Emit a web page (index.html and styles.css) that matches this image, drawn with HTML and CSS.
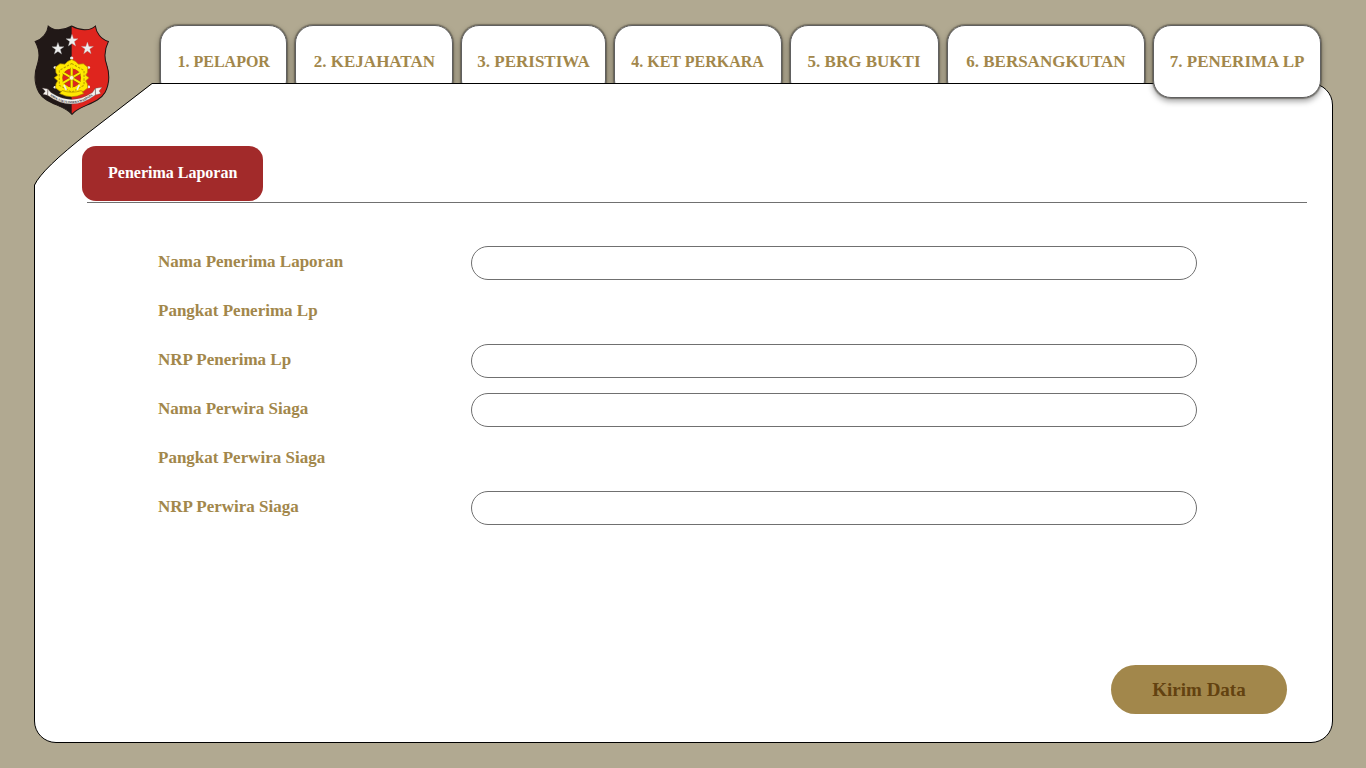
FILE: index.html
```html
<!DOCTYPE html>
<html lang="id">
<head>
<meta charset="utf-8">
<meta name="viewport" content="width=device-width, initial-scale=1">
<title>Penerima Laporan</title>
<link rel="stylesheet" href="styles.css">
</head>
<body>
<div class="page">
  <header class="header">
    <svg class="logo" viewBox="30 28 226 269" role="img" aria-label="Logo Reserse">
      <defs>
        <path id="shield" d="M72 31C88 46 116 46 142 31C168 46 197 46 213 31C215 51 230 71 252 77C240 101 239 124 246 144C256 174 254 206 242 229C222 265 165 267 143 295C121 267 64 265 44 229C31 205 29 174 40 144C47 124 46 101 33 77C54 71 70 51 72 31Z"/>
        <clipPath id="right-half"><path d="M142 20H260V300H142Z"/></clipPath>
        <path id="star" d="M0-19L4.500-6L18-6L7 2L11 16L0 8L-11 16L-7 2L-18-6L-4.500-6Z"/>
        <path id="motto" d="M77 239Q142 287 210 235"/>
      </defs>
      <use href="#shield" fill="#211817"/>
      <use href="#shield" fill="#df251e" clip-path="url(#right-half)"/>
      <use href="#shield" fill="none" stroke="#211817" stroke-width="3"/>
      <g fill="#eeeeee" stroke="#aaa" stroke-width="1">
        <use href="#star" x="143" y="75"/><use href="#star" x="101" y="99"/><use href="#star" x="189" y="98"/>
      </g>
      <g fill="#eee">
        <circle cx="142" cy="127" r="5"/><circle cx="92" cy="155" r="4"/><circle cx="193" cy="155" r="4"/><circle cx="92" cy="214" r="4"/><circle cx="193" cy="213" r="4"/>
      </g>
      <path d="M142 131L154 137L162 145L177 144L190 154L189 170L184 178L194 186L184 195L189 204L190 216L177 226L162 226L154 236L142 242L130 236L122 226L107 226L94 216L95 204L100 195L90 186L100 178L95 170L94 154L107 144L122 145L130 137Z" fill="#ffe800" stroke="#b38d00" stroke-width="2"/>
      <path d="M142 143L179 164V208L142 229L105 208V164Z" fill="none" stroke="#b59b00" stroke-width="3" stroke-dasharray="7 4"/>
      <circle cx="142" cy="186" r="31" fill="#df251e" stroke="#ffed00" stroke-width="6"/>
      <circle cx="142" cy="186" r="27" fill="none" stroke="#8a6500" stroke-width="1"/>
      <path d="M142 156V216M116 171L168 201M168 171L116 201" stroke="#8a6500" stroke-width="8"/>
      <path d="M142 154V218M115 170L169 202M169 170L115 202" stroke="#ffed00" stroke-width="6"/>
      <circle cx="142" cy="186" r="7" fill="#fff9d0" stroke="#c6a800" stroke-width="2"/>
      <path d="M119 208L126 222M165 208L158 222" stroke="#eee" stroke-width="5"/>
      <path d="M114 224Q142 234 171 224L178 233Q142 252 106 233Z" fill="#ffe800" stroke="#ab8800" stroke-width="2"/>
      <path d="M54 216L71 219L80 230Q142 271 204 230L213 217L233 214L224 225L229 233L213 237Q142 291 70 238L56 235L63 226Z" fill="#f4f1ed" stroke="#5b4a45" stroke-width="1"/>
      <path d="M71 219L70 238M213 217L213 237" stroke="#5b4a45" stroke-width="2"/>
      <text class="motto"><textPath href="#motto">SIDIK SAKTI INDERA WASPADA</textPath></text>
    </svg>
    <nav class="tabs" aria-label="Bagian laporan">
      <button type="button" class="tab tab-pelapor tab-small">1. PELAPOR</button>
      <button type="button" class="tab tab-kejahatan">2. KEJAHATAN</button>
      <button type="button" class="tab tab-peristiwa">3. PERISTIWA</button>
      <button type="button" class="tab tab-perkara tab-small">4. KET PERKARA</button>
      <button type="button" class="tab tab-bukti">5. BRG BUKTI</button>
      <button type="button" class="tab tab-bersangkutan">6. BERSANGKUTAN</button>
      <button type="button" class="tab tab-penerima tab-active" aria-current="page">7. PENERIMA LP</button>
    </nav>
  </header>

  <main class="panel">
    <svg class="corner" viewBox="0 0 119 103" aria-hidden="true">
      <path class="corner-fill" d="M0 0H118V1L54 50Q8 86 1 102H0Z"/>
      <path class="corner-line" d="M119 0.500H118L54 50Q8 86 0.500 102V103"/>
    </svg>
    <div class="section-head"><h1 class="section-title">Penerima Laporan</h1></div>
    <form class="form">
      <div class="fields">
        <div class="row"><label for="nama-penerima">Nama Penerima Laporan</label><input id="nama-penerima" type="text"></div>
        <div class="row"><span>Pangkat Penerima Lp</span></div>
        <div class="row"><label for="nrp-penerima">NRP Penerima Lp</label><input id="nrp-penerima" type="text"></div>
        <div class="row"><label for="nama-perwira">Nama Perwira Siaga</label><input id="nama-perwira" type="text"></div>
        <div class="row"><span>Pangkat Perwira Siaga</span></div>
        <div class="row"><label for="nrp-perwira">NRP Perwira Siaga</label><input id="nrp-perwira" type="text"></div>
      </div>
      <button class="submit" type="submit">Kirim Data</button>
    </form>
  </main>
</div>
</body>
</html>
```
FILE: styles.css
```css
* { box-sizing: border-box; }
body {
  margin: 0;
  background: #b1a991;
  color: #a2874b;
  font-family: "Liberation Serif", "Times New Roman", serif;
  font-weight: bold;
}
button, input { font: inherit; color: inherit; }
.page {
  display: flex;
  flex-direction: column;
  min-height: 100vh;
  padding: 25px 33px 25px 34px;
}
.header { display: flex; align-items: flex-start; padding-right: 12px; }
.logo {
  position: relative;
  z-index: 2;
  flex: none;
  width: 76px;
  height: 90px;
  margin-bottom: -17px;
}
.motto { font-size: 9px; fill: #211817; }
.tabs { display: flex; flex: 1; gap: 8px; margin-left: 50px; }
.tab {
  flex: 1 1 0;
  min-width: 0;
  height: 73px;
  padding: 0;
  border: 1px solid #606060;
  border-radius: 18px;
  background: #fff;
  box-shadow: 0 0 1px 1px rgba(70, 65, 55, 0.5), 0 3px 6px rgba(0, 0, 0, 0.4);
  font-size: 17px;
  line-height: 20px;
  white-space: nowrap;
  cursor: pointer;
}
.tab-small { font-size: 16px; }
.tab-pelapor { flex-grow: 127; }
.tab-kejahatan { flex-grow: 158; }
.tab-peristiwa { flex-grow: 144; }
.tab-perkara { flex-grow: 168; }
.tab-bukti { flex-grow: 149; }
.tab-bersangkutan { flex-grow: 199; }
.tab-penerima { flex-grow: 168; }
.tab-active { position: relative; z-index: 2; }
.panel {
  position: relative;
  z-index: 1;
  display: flex;
  flex: 1;
  flex-direction: column;
  margin-top: -15px;
  padding: 62px 25px 28px 47px;
  border: 1px solid #000;
  border-radius: 0 22px 22px 22px;
  background: #fff;
}
.corner { position: absolute; top: -1px; left: -1px; width: 119px; height: 103px; }
.corner-fill { fill: #b1a991; }
.corner-line { fill: none; stroke: #000; stroke-width: 1; }
.section-head { position: relative; display: flex; padding-bottom: 2px; }
.section-head::after {
  content: "";
  position: absolute;
  right: 0;
  bottom: 0;
  left: 5px;
  height: 1px;
  background: #707070;
}
.section-title {
  margin: 0;
  padding: 17px 26px 18px;
  border-radius: 14px;
  background: #a22a2a;
  color: #fff;
  font-size: 16px;
  line-height: 20px;
}
.form {
  display: flex;
  flex: 1;
  flex-direction: column;
  padding: 43px 20px 0 76px;
}
.fields { display: grid; gap: 15px; padding-right: 90px; font-size: 17px; line-height: 20px; }
.row { display: grid; grid-template-columns: 313px 1fr; min-height: 34px; }
.row label, .row span { padding-top: 6px; }
.row input {
  min-width: 0;
  height: 34px;
  padding: 0 16px;
  border: 1px solid #707070;
  border-radius: 17px;
  background: #fff;
}
.submit {
  align-self: flex-end;
  min-width: 176px;
  height: 49px;
  margin-top: auto;
  border: 0;
  border-radius: 25px;
  background: #a2874b;
  color: #634210;
  font-size: 19px;
  cursor: pointer;
}
```
